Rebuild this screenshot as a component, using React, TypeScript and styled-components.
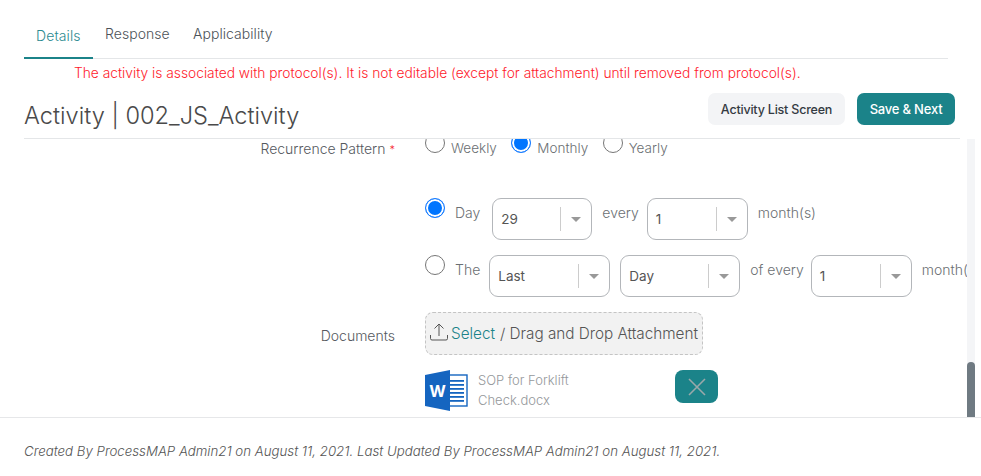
import React from "react";
import styled, { createGlobalStyle } from "styled-components";

const Global = createGlobalStyle`
  html, body { margin: 0; padding: 0; background: #fff; }
  body { font-family: Inter, "Liberation Sans", sans-serif; font-weight: 300; color: #555; overflow: hidden; }
  * { box-sizing: border-box; }
`;

const Page = styled.div`
  width: 981px;
  height: 476px;
  display: flex;
  flex-direction: column;
`;

const Tabs = styled.nav`
  height: 59px;
  margin: 0 33px 0 24px;
  display: flex;
  align-items: flex-end;
  border-bottom: 1px solid #e4e6e8;
`;

const Tab = styled.div<{ $active?: boolean; $width: number }>`
  height: 58px;
  width: ${(p) => p.$width}px;
  padding: ${(p) => (p.$active ? "26px 0 0 12px" : "24px 0 0 12px")};
  font-size: 14px;
  letter-spacing: ${(p) => (p.$active ? "0.1px" : "0.05px")};
  line-height: 18px;
  color: ${(p) => (p.$active ? "#2a8a90" : "#4c5258")};
  border-bottom: ${(p) => (p.$active ? "2px solid #1b8389" : "none")};
  margin-bottom: -1px;
`;

const Notice = styled.div`
  height: 27px;
  padding: 5px 0 0 74px;
  font-size: 13.77px;
  line-height: 18px;
  color: #ff1a2b;
  white-space: nowrap;
`;

const Header = styled.header`
  height: 53px;
  margin: 0 21px 0 24px;
  padding: 7px 5px 0 0;
  display: flex;
  align-items: flex-start;
  gap: 12px;
  border-bottom: 1px solid #e4e6e8;
`;

const Title = styled.h1`
  flex: 1;
  margin: 0;
  padding-top: 8px;
  font-size: 23.6px;
  line-height: 30px;
  font-weight: 300;
  color: #4a4a4a;
`;

const Button = styled.button<{ $primary?: boolean }>`
  height: 32px;
  width: ${(p) => (p.$primary ? 98 : 137)}px;
  padding: 0;
  border: 0;
  border-radius: 7px;
  font-family: inherit;
  font-size: ${(p) => (p.$primary ? "13px" : "12.5px")};
  font-weight: 500;
  letter-spacing: -0.2px;
  color: ${(p) => (p.$primary ? "#fff" : "#333a42")};
  background: ${(p) => (p.$primary ? "#1b8389" : "#f3f4f6")};
`;

const Body = styled.main`
  height: 279px;
  display: flex;
  border-bottom: 1px solid #e6e7e9;
`;

const Scroller = styled.div`
  width: 967px;
  height: 100%;
  overflow: hidden;
`;

const Track = styled.div`
  width: 8px;
  height: 100%;
  background: #f4f5f7;
  display: flex;
  flex-direction: column;
  justify-content: flex-end;
`;

const Thumb = styled.div`
  height: 55px;
  background: #6f7a82;
  border-radius: 4px 4px 0 0;
`;

const Form = styled.div`
  margin-top: -6px;
  display: flex;
  flex-direction: column;
  white-space: nowrap;
`;

const Row = styled.div<{ $height: number }>`
  height: ${(p) => p.$height}px;
  display: flex;
  align-items: flex-start;
`;

const Label = styled.label<{ $top: number }>`
  flex: none;
  width: 395px;
  margin-right: 30px;
  padding-top: ${(p) => p.$top}px;
  text-align: right;
  font-size: 14px;
  line-height: 18px;
  color: #55595e;
`;

const Required = styled.span`
  color: #f5222d;
  font-size: 11px;
  margin-left: 4px;
`;

const RadioGroup = styled.div`
  display: flex;
  gap: 14.5px;
`;

const RadioItem = styled.div`
  display: flex;
  gap: 6px;
`;

const Radio = styled.span<{ $checked?: boolean }>`
  flex: none;
  width: 20px;
  height: 20px;
  border-radius: 50%;
  border: 1px solid ${(p) => (p.$checked ? "#1a7dff" : "#767676")};
  background: ${(p) => (p.$checked ? "#0075ff" : "#fff")};
  box-shadow: ${(p) => (p.$checked ? "inset 0 0 0 2px #fff" : "none")};
`;

const RadioText = styled.span`
  font-size: 13.5px;
  line-height: 30px;
  color: #6b6f73;
`;

const FieldRow = styled.div`
  flex: none;
  display: flex;
  align-items: flex-start;
`;

const Text = styled.span<{ $left: number; $right: number }>`
  flex: none;
  margin: 0 ${(p) => p.$right}px 0 ${(p) => p.$left}px;
  font-size: 14px;
  line-height: 30px;
  color: #6b6f73;
`;

const Select = styled.div<{ $width: number }>`
  flex: none;
  width: ${(p) => p.$width}px;
  height: 42px;
  padding: 0 10px 0 8px;
  display: flex;
  align-items: center;
  border: 1px solid #b3b6ba;
  border-radius: 9px;
  background: #fff;
`;

const SelectValue = styled.span`
  flex: 1;
  font-size: 13.5px;
  font-weight: 400;
  color: #555;
`;

const Divider = styled.span`
  width: 1px;
  height: 24px;
  margin-right: 10px;
  background: #ccc;
`;

const Caret = styled.span`
  width: 0;
  height: 0;
  border-style: solid;
  border-width: 5px 5px 0;
  border-color: #999 transparent transparent;
`;

const Dropzone = styled.div`
  width: 278px;
  height: 43px;
  padding-left: 3px;
  display: flex;
  align-items: center;
  gap: 2px;
  color: #555;
  background: #f2f2f2;
  border: 1px dashed #c4c4c4;
  border-radius: 8px;
`;

const UploadIcon = styled.svg`
  flex: none;
  margin-bottom: 3px;
`;

const SelectLink = styled.span`
  color: #1b8389;
  margin-right: 5px;
`;

const DropText = styled.span`
  font-size: 15.3px;
  letter-spacing: -0.02px;
`;

const FileRow = styled.div`
  display: flex;
  align-items: flex-start;
`;

const FileName = styled.div`
  width: 197px;
  margin-left: 10px;
  padding: 0 70px 0 0;
  font-size: 13px;
  line-height: 20px;
  color: #95989b;
  white-space: normal;
`;

const RemoveButton = styled.button`
  width: 43px;
  height: 33px;
  padding: 0;
  border: 0;
  border-radius: 8px;
  background: #1b8389;
  display: flex;
  align-items: center;
  justify-content: center;
`;

const Footer = styled.footer`
  padding: 24px 0 0 24px;
  font-size: 13.27px;
  line-height: 18px;
  font-style: italic;
  color: #555;
  white-space: nowrap;
`;

const WordIcon = () => (
  <svg width="43" height="41" viewBox="0 0 43 41" style={{ flex: "none" }}>
    <rect x="20" y="5" width="22" height="31" fill="#fff" stroke="#1565c0" strokeWidth="1.4" />
    {[10, 14, 18, 22, 26, 30].map((y) => (
      <rect key={y} x="24" y={y} width="15" height="1.8" fill="#1565c0" />
    ))}
    <polygon points="0,5 25,0 25,41 0,36" fill="#1565c0" />
    <text x="12.5" y="27" textAnchor="middle" fontFamily="Inter, sans-serif" fontWeight="700" fontSize="16" fill="#fff">W</text>
  </svg>
);

const Sel = ({ width, value }: { width: number; value: string }) => (
  <Select $width={width}>
    <SelectValue>{value}</SelectValue>
    <Divider />
    <Caret />
  </Select>
);

export default function App() {
  return (
    <Page>
      <Global />
      <Tabs>
        <Tab $active $width={69}>Details</Tab>
        <Tab $width={88}>Response</Tab>
        <Tab $width={110}>Applicability</Tab>
      </Tabs>
      <Notice>The activity is associated with protocol(s). It is not editable (except for attachment) until removed from protocol(s).</Notice>
      <Header>
        <Title>Activity | 002_JS_Activity</Title>
        <Button>Activity List Screen</Button>
        <Button $primary>Save &amp; Next</Button>
      </Header>
      <Body>
        <Scroller>
          <Form>
            <Row $height={65}>
              <Label $top={7}>Recurrence Pattern<Required>*</Required></Label>
              <RadioGroup>
                <RadioItem><Radio /><RadioText>Weekly</RadioText></RadioItem>
                <RadioItem><Radio $checked /><RadioText>Monthly</RadioText></RadioItem>
                <RadioItem><Radio /><RadioText>Yearly</RadioText></RadioItem>
              </RadioGroup>
            </Row>
            <Row $height={57}>
              <Label $top={0} />
              <FieldRow>
                <Radio $checked />
                <Text $left={10} $right={12}>Day</Text>
                <Sel width={100} value="29" />
                <Text $left={10} $right={8}>every</Text>
                <Sel width={101} value="1" />
                <Text $left={10} $right={0}>month(s)</Text>
              </FieldRow>
            </Row>
            <Row $height={57}>
              <Label $top={0} />
              <FieldRow>
                <Radio />
                <Text $left={10} $right={9}>The</Text>
                <Sel width={121} value="Last" />
                <Text $left={10} $right={0} />
                <Sel width={120} value="Day" />
                <Text $left={10} $right={7}>of every</Text>
                <Sel width={101} value="1" />
                <Text $left={10} $right={0}>month(s)</Text>
              </FieldRow>
            </Row>
            <Row $height={58}>
              <Label $top={15}>Documents</Label>
              <Dropzone>
                <UploadIcon width="20" height="20" viewBox="0 0 20 20" fill="none" stroke="#555" strokeWidth="1">
                  <path d="M10 14V2M5.5 6.5 10 2l4.5 4.5M1.5 13v3.5q0 1.5 1.5 1.5h14q1.5 0 1.5-1.5V13" />
                </UploadIcon>
                <DropText><SelectLink>Select</SelectLink>/ Drag and Drop Attachment</DropText>
              </Dropzone>
            </Row>
            <Row $height={48}>
              <Label $top={0} />
              <FileRow>
                <WordIcon />
                <FileName>SOP for Forklift Check.docx</FileName>
                <RemoveButton aria-label="Remove">
                  <svg width="18" height="18" viewBox="0 0 18 18" stroke="#9aa8aa" strokeWidth="1.6">
                    <path d="M1 1 17 17M17 1 1 17" />
                  </svg>
                </RemoveButton>
              </FileRow>
            </Row>
          </Form>
        </Scroller>
        <Track><Thumb /></Track>
      </Body>
      <Footer>Created By ProcessMAP Admin21 on August 11, 2021. Last Updated By ProcessMAP Admin21 on August 11, 2021.</Footer>
    </Page>
  );
}
